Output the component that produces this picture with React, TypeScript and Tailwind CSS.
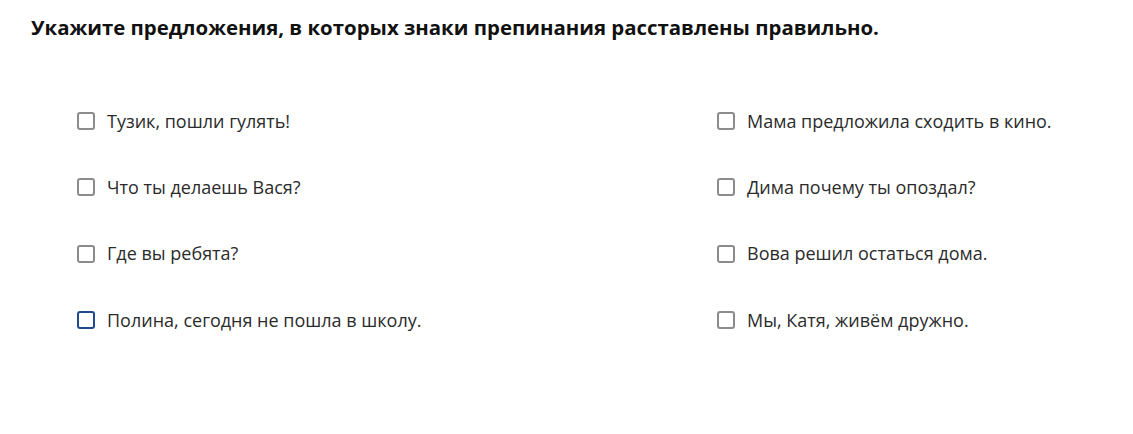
const left = [
  { text: 'Тузик, пошли гулять!', focused: false },
  { text: 'Что ты делаешь Вася?', focused: false },
  { text: 'Где вы ребята?', focused: false },
  { text: 'Полина, сегодня не пошла в школу.', focused: true },
];

const right = [
  { text: 'Мама предложила сходить в кино.', focused: false },
  { text: 'Дима почему ты опоздал?', focused: false },
  { text: 'Вова решил остаться дома.', focused: false },
  { text: 'Мы, Катя, живём дружно.', focused: false },
];

function Option({ text, focused }: { text: string; focused: boolean }) {
  return (
    <label className="flex items-center h-[66.3px] cursor-pointer">
      <span
        className={`w-[18px] h-[18px] rounded-[3px] border-2 bg-white shrink-0 ${
          focused ? 'border-[#1d4a8f]' : 'border-[#8c8c8c]'
        }`}
      />
      <span className="ml-[12px] text-[18px] text-[#2b2b2b]">{text}</span>
    </label>
  );
}

export default function App() {
  return (
    <div className="w-[1133px] h-[434px] bg-white" style={{ fontFamily: '"Open Sans", sans-serif' }}>
      <h1 className="pl-[31px] pt-[13px] text-[20.4px] font-bold text-[#111] leading-[28px]">
        Укажите предложения, в которых знаки препинания расставлены правильно.
      </h1>
      <div className="grid grid-cols-[640px_1fr] pl-[77px] pt-[47px]">
        <div className="flex flex-col">
          {left.map((o) => (
            <Option key={o.text} {...o} />
          ))}
        </div>
        <div className="flex flex-col">
          {right.map((o) => (
            <Option key={o.text} {...o} />
          ))}
        </div>
      </div>
    </div>
  );
}
